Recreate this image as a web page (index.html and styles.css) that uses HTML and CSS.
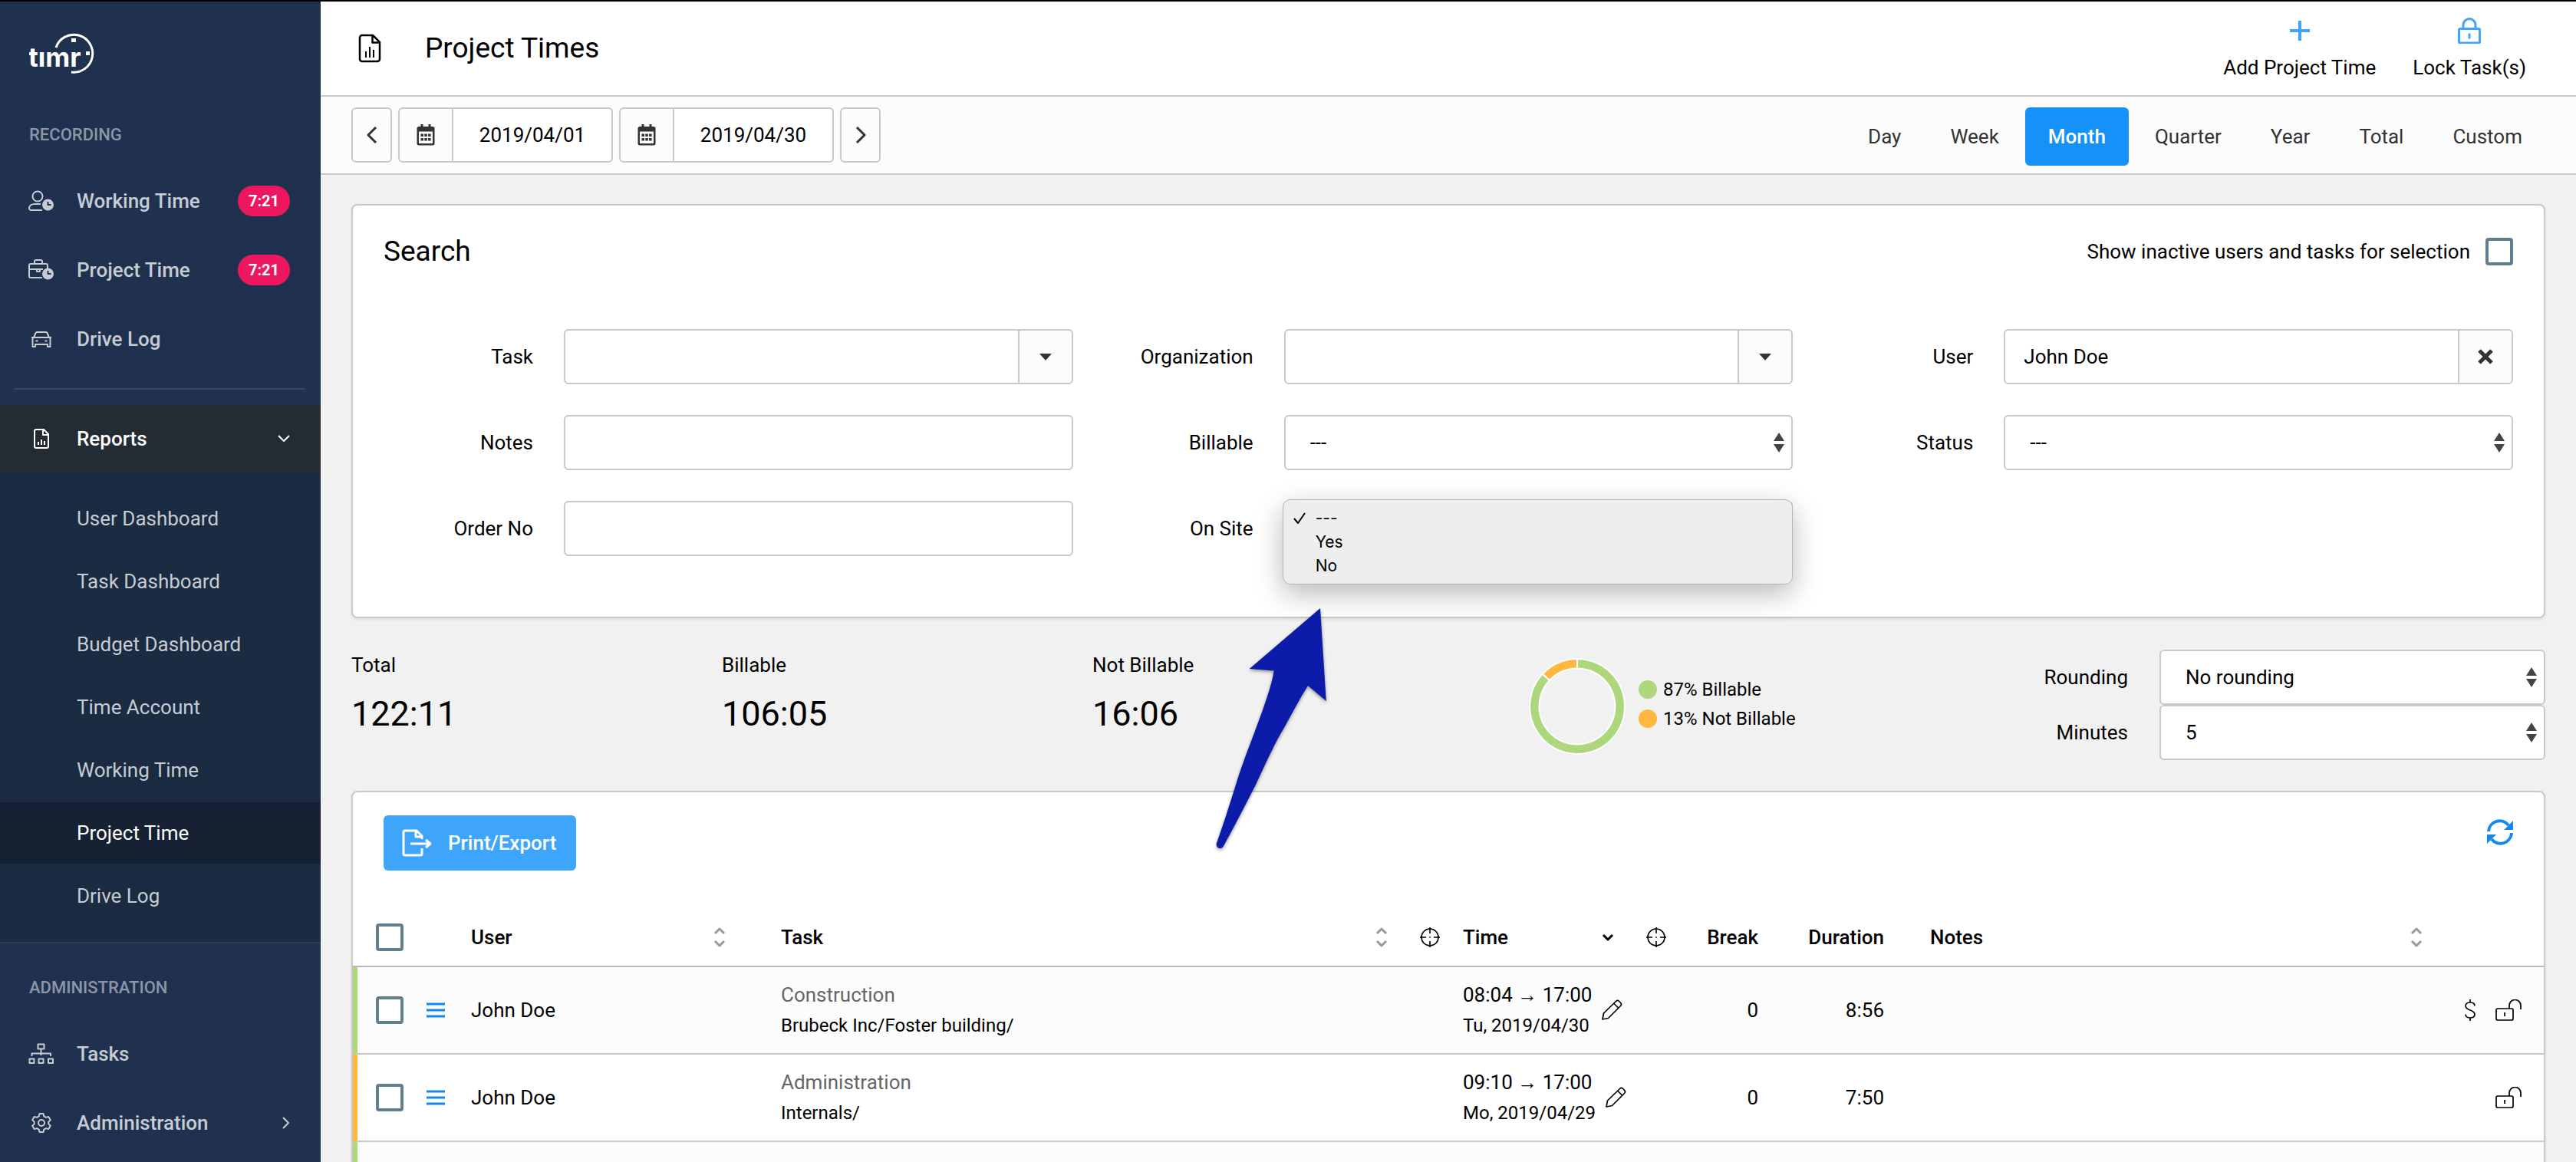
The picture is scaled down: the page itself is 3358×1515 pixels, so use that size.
FILE: index.html
```html
<!DOCTYPE html>
<html lang="en">
<head>
<meta charset="utf-8">
<meta name="viewport" content="width=device-width, initial-scale=1">
<title>Project Times</title>
<link rel="stylesheet" href="styles.css">
</head>
<body>
<svg class="sprite" aria-hidden="true">
  <symbol id="i-report" viewBox="0 0 30 38"><path stroke-width="2.500" d="M2 5a3 3 0 0 1 3-3h14l9 9v22a3 3 0 0 1-3 3H5a3 3 0 0 1-3-3zM18.500 2v9.500H28"/><path stroke-width="2" d="M10 31v-8M15 31V17M20 31v-10"/></symbol>
  <symbol id="i-calendar" viewBox="0 0 24 28"><path fill="currentColor" d="M5.500 0h3v3h7V0h3v3H21a2.500 2.500 0 0 1 2.500 2.500V25A2.500 2.500 0 0 1 21 27.500H3A2.500 2.500 0 0 1 .5 25V5.500A2.500 2.500 0 0 1 3 3h2.500z"/><path fill="#fcfcfc" d="M3 9.500h18V25H3z"/><path fill="currentColor" d="M5.500 12.500h3.500v3.500H5.500zM10.300 12.500h3.500v3.500h-3.500zM15.100 12.500h3.500v3.500h-3.500zM5.500 18h3.500v3.500H5.500zM10.300 18h3.500v3.500h-3.500zM15.100 18h3.500v3.500h-3.500z"/></symbol>
  <symbol id="i-caret" viewBox="0 0 16 9"><path fill="currentColor" d="M0 0h16L8 9z"/></symbol>
  <symbol id="i-updown" viewBox="0 0 14 26"><path fill="currentColor" d="M0 11 7 0l7 11zM0 15h14L7 26z"/></symbol>
  <symbol id="i-sort" viewBox="0 0 16 26"><path d="m2 8 6-6 6 6M2 18l6 6 6-6"/></symbol>
  <symbol id="i-target" viewBox="0 0 26 26"><g stroke-width="1.600"><circle cx="13" cy="13" r="11"/><path d="M13 0v8M13 18v8M0 13h8M18 13h8M12.200 13h1.600"/></g></symbol>
  <symbol id="i-pencil" viewBox="0 0 28 28"><path stroke-width="1.700" d="m2 26 1.500-8L19.500 2.500a3 3 0 0 1 4.200 0l1.800 1.800a3 3 0 0 1 0 4.200L9.500 24.500zM17 5.500l5.500 5.500"/></symbol>
  <symbol id="i-unlock" viewBox="0 0 34 28"><path stroke-width="1.700" d="M3 12h18a2 2 0 0 1 2 2v11a2 2 0 0 1-2 2H3a2 2 0 0 1-2-2V14a2 2 0 0 1 2-2zM12 17v5M18 12V8a7.500 7.500 0 0 1 15 0v5"/></symbol>
  <symbol id="i-menu" viewBox="0 0 24 20"><path d="M0 2h24M0 10h24M0 18h24"/></symbol>
</svg>

<div class="app">
  <nav class="sidebar" aria-label="Main">
    <a class="logo" href="#" aria-label="timr">
      <svg width="88" height="60" viewBox="0 0 88 60">
        <text x="-1" y="49" class="logo-text">tımr</text>
        <path d="M35 24A24.500 24.500 0 1 1 55 56" class="logo-arc"/>
        <path fill="#fff" d="M55 12h6v5h-6zM74 29h5v5h-5z"/>
      </svg>
    </a>
    <h2 class="section">RECORDING</h2>
    <a class="item" href="#">
      <svg class="icon" width="34" height="28" viewBox="0 0 34 28"><circle cx="12" cy="8" r="6.500"/><path d="M18 26H3.500A2.500 2.500 0 0 1 1 23.500C1 20 4 18 8 18h8"/><circle cx="25.500" cy="19" r="7.500" class="solid"/><path d="M25.500 15v4h4" class="hand"/></svg>
      <span>Working Time</span><span class="badge">7:21</span>
    </a>
    <a class="item" href="#">
      <svg class="icon" width="34" height="28" viewBox="0 0 34 28"><path d="M18 24H3a2 2 0 0 1-2-2V8a2 2 0 0 1 2-2h20a2 2 0 0 1 2 2v4M8 6V3a2 2 0 0 1 2-2h6a2 2 0 0 1 2 2v3M1 13h18M11 13v3h4v-3"/><circle cx="25.500" cy="19" r="7.500" class="solid"/><path d="M25.500 15v4h4" class="hand"/></svg>
      <span>Project Time</span><span class="badge">7:21</span>
    </a>
    <a class="item" href="#">
      <svg class="icon" width="34" height="28" viewBox="0 0 34 28"><path d="M7 12 9.500 6A2 2 0 0 1 11.500 5h11a2 2 0 0 1 2 1L27 12M4 12h26M7 12h20a1.500 1.500 0 0 1 1.500 1.500V24H25v-3H9v3H5.500V13.500A1.500 1.500 0 0 1 7 12zM9.500 16.500h3M21.500 16.500h3"/></svg>
      <span>Drive Log</span>
    </a>
    <hr class="rule">
    <a class="item item-open" href="#" aria-expanded="true">
      <svg class="icon" width="34" height="28" viewBox="0 0 34 28"><path d="M8 4a2 2 0 0 1 2-2h10l6 6v16a2 2 0 0 1-2 2H10a2 2 0 0 1-2-2zM19 2v7h7M13 22v-4M17 22v-7M21 22v-5"/></svg>
      <span>Reports</span>
      <svg class="chev" width="16" height="10" viewBox="0 0 16 10"><path d="m1 1 7 7 7-7"/></svg>
    </a>
    <div class="submenu">
      <a href="#">User Dashboard</a>
      <a href="#">Task Dashboard</a>
      <a href="#">Budget Dashboard</a>
      <a href="#">Time Account</a>
      <a href="#">Working Time</a>
      <a href="#" class="current" aria-current="page">Project Time</a>
      <a href="#">Drive Log</a>
    </div>
    <h2 class="section">ADMINISTRATION</h2>
    <a class="item" href="#">
      <svg class="icon" width="34" height="28" viewBox="0 0 34 28"><path d="M12.500 1.500h8v6h-8zM1.500 20.500h6v5.500h-6zM13.500 20.500h6v5.500h-6zM26 20.500h6v5.500h-6zM16.500 7.500V16M4.500 17v-3.500h24.500V17"/></svg>
      <span>Tasks</span>
    </a>
    <a class="item" href="#">
      <svg class="icon" width="34" height="28" viewBox="0 0 34 28"><circle cx="17" cy="14" r="4"/><path d="M14.500 2h5l.8 3.400 2.700 1.500 3.300-1 2.500 4.300-2.500 2.400v2.800l2.500 2.400-2.500 4.300-3.300-1-2.700 1.500-.8 3.400h-5l-.8-3.400L11 21.100l-3.300 1-2.500-4.300 2.500-2.400v-2.800l-2.500-2.400 2.500-4.300 3.300 1 2.700-1.500z"/></svg>
      <span>Administration</span>
      <svg class="chev" width="10" height="16" viewBox="0 0 10 16"><path d="m1 1 7 7-7 7"/></svg>
    </a>
  </nav>

  <main class="main">
    <header class="header">
      <svg class="header-icon" width="48" height="40" aria-hidden="true"><use href="#i-report" x="9" y="1" width="30" height="38"/></svg>
      <h1>Project Times</h1>
      <div class="actions">
        <button type="button" class="action"><svg width="34" height="34" viewBox="0 0 34 34"><path d="M17 4v26M4 17h26" stroke-width="4"/></svg>Add Project Time</button>
        <button type="button" class="action"><svg width="34" height="34" viewBox="0 0 34 34"><path d="M5 14.500h24a1.500 1.500 0 0 1 1.500 1.500v15.500A1.500 1.500 0 0 1 29 33H5a1.500 1.500 0 0 1-1.500-1.500V16A1.500 1.500 0 0 1 5 14.500zM9 14V9.500a8 8 0 0 1 16 0V14M17 20.500v7" stroke-width="3"/></svg>Lock Task(s)</button>
      </div>
    </header>

    <div class="toolbar">
      <div class="range">
        <button type="button" class="step" aria-label="Previous"><svg width="14" height="24" viewBox="0 0 14 24"><path d="M12 2 2 12l10 10"/></svg></button>
        <div class="date"><label for="from" aria-label="From"><svg width="24" height="28"><use href="#i-calendar"/></svg></label><input id="from" type="text" value="2019/04/01"></div>
        <div class="date"><label for="to" aria-label="To"><svg width="24" height="28"><use href="#i-calendar"/></svg></label><input id="to" type="text" value="2019/04/30"></div>
        <button type="button" class="step" aria-label="Next"><svg width="14" height="24" viewBox="0 0 14 24"><path d="m2 2 10 10L2 22"/></svg></button>
      </div>
      <div class="periods">
        <button type="button">Day</button><button type="button">Week</button><button type="button" class="on">Month</button><button type="button">Quarter</button><button type="button">Year</button><button type="button">Total</button><button type="button">Custom</button>
      </div>
    </div>

    <div class="content">
      <section class="card search">
        <div class="search-head">
          <h2>Search</h2>
          <label class="inactive">Show inactive users and tasks for selection <input type="checkbox" class="check"></label>
        </div>
        <form class="fields">
          <div class="field"><label for="task">Task</label><div class="combo"><input id="task" type="text"><button type="button" aria-label="Open"><svg width="16" height="9"><use href="#i-caret"/></svg></button></div></div>
          <div class="field"><label for="org">Organization</label><div class="combo"><input id="org" type="text"><button type="button" aria-label="Open"><svg width="16" height="9"><use href="#i-caret"/></svg></button></div></div>
          <div class="field"><label for="user">User</label><div class="combo"><input id="user" type="text" value="John Doe"><button type="button" aria-label="Clear"><svg width="20" height="20" viewBox="0 0 20 20"><path d="m2 2 16 16M18 2 2 18" stroke="currentColor" stroke-width="5"/></svg></button></div></div>
          <div class="field"><label for="notes">Notes</label><input id="notes" class="box" type="text"></div>
          <div class="field"><label for="billable">Billable</label><div class="select"><select id="billable" class="box"><option>---</option></select><svg width="14" height="26"><use href="#i-updown"/></svg></div></div>
          <div class="field"><label for="status">Status</label><div class="select"><select id="status" class="box"><option>---</option></select><svg width="14" height="26"><use href="#i-updown"/></svg></div></div>
          <div class="field"><label for="order">Order No</label><input id="order" class="box" type="text"></div>
          <div class="field"><label for="onsite">On Site</label>
            <div class="select">
              <select id="onsite" class="box"><option></option></select>
              <ul class="popup" role="listbox" aria-label="On Site">
                <li role="option" aria-selected="true"><svg width="18" height="16" viewBox="0 0 18 16"><path d="m2 8 5 6 9-13"/></svg>---</li>
                <li role="option">Yes</li>
                <li role="option">No</li>
              </ul>
              <svg class="pointer" width="160" height="330" viewBox="0 0 160 330"><path d="M140 8 47.700 87l32 2.500C78 101 74 114 70 126C57 165 40 205 30 238C20 270 12 295 5 314C3 320 11 324 14 318C28 293 42 265 56 238C70 208 80 185 94 162C104 144 113 126 124 109L147.800 129z"/></svg>
            </div>
          </div>
        </form>
      </section>

      <section class="stats">
        <dl class="stat"><dt>Total</dt><dd>122:11</dd></dl>
        <dl class="stat"><dt>Billable</dt><dd>106:05</dd></dl>
        <dl class="stat"><dt>Not Billable</dt><dd>16:06</dd></dl>
        <div class="chart">
          <svg width="128" height="128" viewBox="-64 -64 128 128" role="img" aria-label="87% billable">
            <path fill="#aed77d" d="M0-62A62 62 0 1 1-45.200-42.400L-36.100-33.900A49.500 49.500 0 1 0 0-49.500z"/>
            <path fill="#ffb740" d="M0-62A62 62 0 0 0-45.200-42.400L-36.100-33.900A49.500 49.500 0 0 1 0-49.500z"/>
          </svg>
          <ul class="legend"><li class="yes">87% Billable</li><li class="no">13% Not Billable</li></ul>
        </div>
        <div class="rounding">
          <label for="rounding">Rounding</label><div class="select"><select id="rounding" class="box"><option>No rounding</option></select><svg width="14" height="26"><use href="#i-updown"/></svg></div>
          <label for="minutes">Minutes</label><div class="select"><select id="minutes" class="box"><option>5</option></select><svg width="14" height="26"><use href="#i-updown"/></svg></div>
        </div>
      </section>

      <section class="card list">
        <div class="list-head">
          <button type="button" class="export"><svg width="40" height="36" viewBox="0 0 40 36"><path d="M26 13v-4l-7-7H4a2 2 0 0 0-2 2v28a2 2 0 0 0 2 2h20a2 2 0 0 0 2-2v-7M18 2v8h8M11 19h26M31 14l6 5-6 5"/></svg>Print/Export</button>
          <button type="button" class="refresh" aria-label="Refresh"><svg width="36" height="34" viewBox="0 0 36 34"><path d="M3 16A14.500 14.500 0 0 1 29 8M33 18A14.500 14.500 0 0 1 7 26"/><path class="tip" d="M35 2v12H23zM1 32V20h12z"/></svg></button>
        </div>
        <table>
          <colgroup><col class="c-check"><col class="c-menu"><col class="c-user"><col class="c-task"><col class="c-target"><col class="c-time"><col class="c-target2"><col class="c-break"><col class="c-duration"><col><col class="c-tools"></colgroup>
          <thead>
            <tr>
              <th class="pick"><input type="checkbox" class="check" aria-label="Select all"></th>
              <th></th>
              <th><div class="head">User<svg class="sort" width="16" height="26"><use href="#i-sort"/></svg></div></th>
              <th class="wide"><div class="head">Task<svg class="sort" width="16" height="26"><use href="#i-sort"/></svg></div></th>
              <th><svg class="line" width="26" height="26"><use href="#i-target"/></svg></th>
              <th><div class="head">Time<svg class="down" width="16" height="10" viewBox="0 0 16 10"><path d="m2 2 6 6 6-6"/></svg></div></th>
              <th><svg class="line" width="26" height="26"><use href="#i-target"/></svg></th>
              <th class="num">Break</th>
              <th class="num">Duration</th>
              <th class="notes"><div class="head">Notes<svg class="sort" width="16" height="26"><use href="#i-sort"/></svg></div></th>
              <th></th>
            </tr>
          </thead>
          <tbody>
            <tr class="billable">
              <td class="pick"><input type="checkbox" class="check" aria-label="Select row"></td>
              <td><svg class="menu" width="24" height="20"><use href="#i-menu"/></svg></td>
              <td>John Doe</td>
              <td class="wide"><div class="kind">Construction</div><div class="small">Brubeck Inc/Foster building/</div></td>
              <td></td>
              <td><div class="when"><div><div>08:04 <span class="to">→</span> 17:00</div><div class="small">Tu, 2019/04/30</div></div><svg class="line" width="28" height="28"><use href="#i-pencil"/></svg></div></td>
              <td></td>
              <td class="num">0</td>
              <td class="num">8:56</td>
              <td></td>
              <td><div class="tools"><svg class="line" width="14" height="28" viewBox="0 0 14 28"><path stroke-width="1.700" d="M13 8.500C13 5.500 10.500 4 7 4S1 5.500 1 8.500c0 6.500 12 4.500 12 11 0 3-2.500 4.500-6 4.500s-6-1.500-6-4.500M7 0v4M7 24v4"/></svg><svg class="line" width="34" height="28"><use href="#i-unlock"/></svg></div></td>
            </tr>
            <tr class="unbillable">
              <td class="pick"><input type="checkbox" class="check" aria-label="Select row"></td>
              <td><svg class="menu" width="24" height="20"><use href="#i-menu"/></svg></td>
              <td>John Doe</td>
              <td class="wide"><div class="kind">Administration</div><div class="small">Internals/</div></td>
              <td></td>
              <td><div class="when"><div><div>09:10 <span class="to">→</span> 17:00</div><div class="small">Mo, 2019/04/29</div></div><svg class="line" width="28" height="28"><use href="#i-pencil"/></svg></div></td>
              <td></td>
              <td class="num">0</td>
              <td class="num">7:50</td>
              <td></td>
              <td><div class="tools"><svg class="line" width="34" height="28"><use href="#i-unlock"/></svg></div></td>
            </tr>
            <tr class="billable"><td class="pick"></td><td colspan="10"></td></tr>
          </tbody>
        </table>
      </section>
    </div>
  </main>
</div>
</body>
</html>
```
FILE: styles.css
```css
* { box-sizing: border-box; }
body {
  margin: 0;
  border-top: 2px solid #000;
  background: #f1f1f1;
  color: #000;
  font: 26px/30px Roboto, "Liberation Sans", sans-serif;
}
button, input, select { font: inherit; color: inherit; }
button { border: 0; background: none; padding: 0; margin: 0; cursor: pointer; }
h1, h2, dl, dd, ul { margin: 0; padding: 0; font-weight: 400; }
ul { list-style: none; }
a { color: inherit; text-decoration: none; }
svg { display: block; flex: none; fill: none; stroke-linejoin: round; }
.sprite { position: absolute; width: 0; height: 0; }

.app { display: flex; height: calc(100vh - 2px); overflow: hidden; }

/* sidebar */
.sidebar { flex: none; width: 418px; background: #1f314f; color: #c7ccd2; overflow: hidden; }
.logo { display: block; padding: 36px 38px 20px; }
.logo-text { font: 700 35px Inter, sans-serif; fill: #fff; }
.logo-arc { stroke: #fff; stroke-width: 3; }
.section { padding: 44px 38px 27px; font-size: 22px; line-height: 28px; font-weight: 500; color: #8c96a5; }
.item { display: flex; align-items: center; height: 90px; padding: 0 40px 0 37px; gap: 29px; font-weight: 500; }
.icon { stroke: currentColor; stroke-width: 2; }
.icon .solid { fill: currentColor; stroke: none; }
.icon .hand { stroke: #1f314f; }
.badge { margin-left: auto; width: 68px; border-radius: 20px; background: #ee1561; color: #fff; font-size: 20px; line-height: 40px; font-weight: 700; text-align: center; }
.rule { margin: 19px 20px 20px 18px; border: 0; border-top: 2px solid #344765; }
.item-open { height: 88px; background: #232c33; color: #fff; }
.chev { margin-left: auto; stroke: currentColor; stroke-width: 2; }
.submenu { display: flex; flex-direction: column; gap: 2px; padding: 20px 0; background: #1a2b42; border-bottom: 2px solid #2a3c59; }
.submenu a { padding-left: 100px; line-height: 80px; }
.submenu .current { background: #162234; color: #fff; }

/* header and toolbar */
.main { flex: 1; min-width: 0; }
.header { display: flex; align-items: center; height: 124px; padding: 0 65px 0 40px; background: #fff; border-bottom: 2px solid #c9c9c9; }
.header-icon { stroke: #000; }
h1, .search-head h2 { font-size: 37px; line-height: 44px; }
.header h1 { margin-left: 48px; }
.actions { display: flex; gap: 48px; margin-left: auto; }
.action { display: flex; flex-direction: column; align-items: center; gap: 16px; }
.action svg { stroke: #3fa4fa; }
.toolbar { display: flex; justify-content: space-between; height: 102px; padding: 14px 40px; background: #fcfcfc; border-bottom: 2px solid #c9c9c9; }
.range { display: flex; gap: 8px; height: 72px; }
.step { display: grid; place-items: center; width: 53px; border: 2px solid #c9c9c9; border-radius: 6px; }
.step svg { stroke: #333; stroke-width: 3; }
.date { display: flex; width: 280px; border: 2px solid #c9c9c9; border-radius: 6px; background: #fff; }
.date label { display: grid; place-items: center; width: 70px; border-right: 2px solid #c9c9c9; border-radius: 6px 0 0 6px; background: #fcfcfc; color: #333; }
.date input { flex: 1; min-width: 0; border: 0; background: none; padding: 0; text-align: center; }
.periods { display: flex; gap: 4px; height: 76px; color: #333; }
.periods button { padding: 0 30px; border-radius: 6px; }
.periods .on { background: #1592f8; color: #fff; font-weight: 500; }

/* cards and fields */
.content { padding: 38px 40px 0; }
.card { background: #fff; border: 2px solid #c9c9c9; border-radius: 8px; box-shadow: 0 2px 4px rgba(0, 0, 0, .08); }
.search { padding: 38px 40px 79px; }
.search-head { display: flex; justify-content: space-between; align-items: center; }
.inactive { display: flex; align-items: center; gap: 20px; }
.check { appearance: none; display: block; width: 36px; height: 36px; margin: 0; border: 4px solid #627f90; border-radius: 4px; background: #fff; }
.fields { display: grid; grid-template-columns: repeat(3, 1fr); gap: 40px; margin-top: 79px; }
.field { display: grid; grid-template-columns: 195px 1fr; gap: 40px; align-items: center; }
.field > label { text-align: right; }
.box, .combo { width: 100%; height: 72px; margin: 0; border: 2px solid #c9c9c9; border-radius: 6px; background: #fff; }
.combo { display: flex; }
.combo input { flex: 1; min-width: 0; border: 0; background: none; padding: 0 24px; }
.combo button { display: grid; place-items: center; width: 70px; border-left: 2px solid #c9c9c9; border-radius: 0 6px 6px 0; background: #fcfcfc; color: #333; }
.select { position: relative; }
.select select { appearance: none; display: block; padding: 0 32px; }
.select > svg { position: absolute; right: 11px; top: 23px; color: #444; }
.popup { position: absolute; z-index: 2; left: -2px; right: 0; top: -2px; padding: 8px 0; border: 1px solid #b5b5b5; border-radius: 10px; background: #eee; box-shadow: 0 12px 36px rgba(0, 0, 0, .28); font: 21px/31px Inter, sans-serif; }
.popup li { position: relative; padding-left: 42px; }
.popup svg { position: absolute; left: 12px; top: 8px; stroke: #000; stroke-width: 2; }
.select > .pointer { z-index: 3; left: -93px; right: auto; top: 132px; fill: #0c1ca8; filter: drop-shadow(0 2px 2px rgba(0, 0, 0, .4)); }

/* totals */
.stats { display: flex; padding: 41px 0 40px; }
.stat { width: 483px; }
.stat dt { line-height: 40px; }
.stat dd { margin-top: 20px; font-size: 45px; line-height: 48px; }
.chart { display: flex; gap: 16px; margin: 10px 0 0 85px; height: 128px; }
.chart path { stroke: #fff; stroke-width: 2; }
.legend { padding-top: 23px; font-size: 24px; line-height: 38px; }
.legend li { display: flex; align-items: center; gap: 8px; }
.legend li::before { content: ""; width: 24px; height: 24px; border-radius: 50%; background: #aed77d; }
.legend .no::before { background: #ffb740; }
.rounding { display: grid; grid-template-columns: auto 503px; column-gap: 41px; align-items: center; margin-left: auto; text-align: right; }

/* list */
.list-head { display: flex; justify-content: space-between; padding: 30px 39px 50px 40px; }
.export { display: flex; align-items: center; gap: 20px; height: 72px; padding: 0 26px 0 24px; border-radius: 6px; background: #3fa5fa; color: #fff; font-weight: 500; }
.export svg { stroke: #fff; stroke-width: 3; }
.refresh { height: 44px; }
.refresh svg { stroke: #1388ee; stroke-width: 4; }
.refresh .tip { fill: #1388ee; stroke: none; }
table { width: 100%; table-layout: fixed; border-collapse: separate; border-spacing: 0; }
.c-check { width: 86px; }
.c-menu { width: 58px; }
.c-user { width: 374px; }
.c-task { width: 863px; }
.c-target { width: 56px; }
.c-time { width: 239px; }
.c-target2 { width: 46px; }
.c-break { width: 120px; }
.c-duration { width: 164px; }
.c-tools { width: 126px; }
th, td { padding: 0 0 0 10px; text-align: left; border-bottom: 2px solid #c9c9c9; }
th { height: 76px; font-weight: 500; border-bottom-color: #b9b9b9; }
td { height: 114px; }
.pick { padding-left: 30px; }
td.pick { padding-left: 24px; border-left: 6px solid #aed77d; }
.unbillable .pick { border-left-color: #ffb740; }
.billable { background: #fcfcfc; }
.wide { padding-left: 40px; }
th.notes { padding-left: 50px; }
.num { text-align: right; padding: 0 10px 0 0; }
.head { display: flex; justify-content: space-between; align-items: center; padding-right: 32px; }
.sort { stroke: #999; stroke-width: 3; }
.down { stroke: #000; stroke-width: 3; }
.line { stroke: #000; }
.menu { stroke: #1388ee; stroke-width: 3; }
.kind { color: #666; }
.kind, .small, .when > div > div { line-height: 40px; }
.small { font-size: 24px; }
.to { font-family: "Liberation Sans", sans-serif; }
.when { display: flex; align-items: center; gap: 12px; }
.tools { display: flex; justify-content: flex-end; gap: 26px; padding-right: 29px; }
```
